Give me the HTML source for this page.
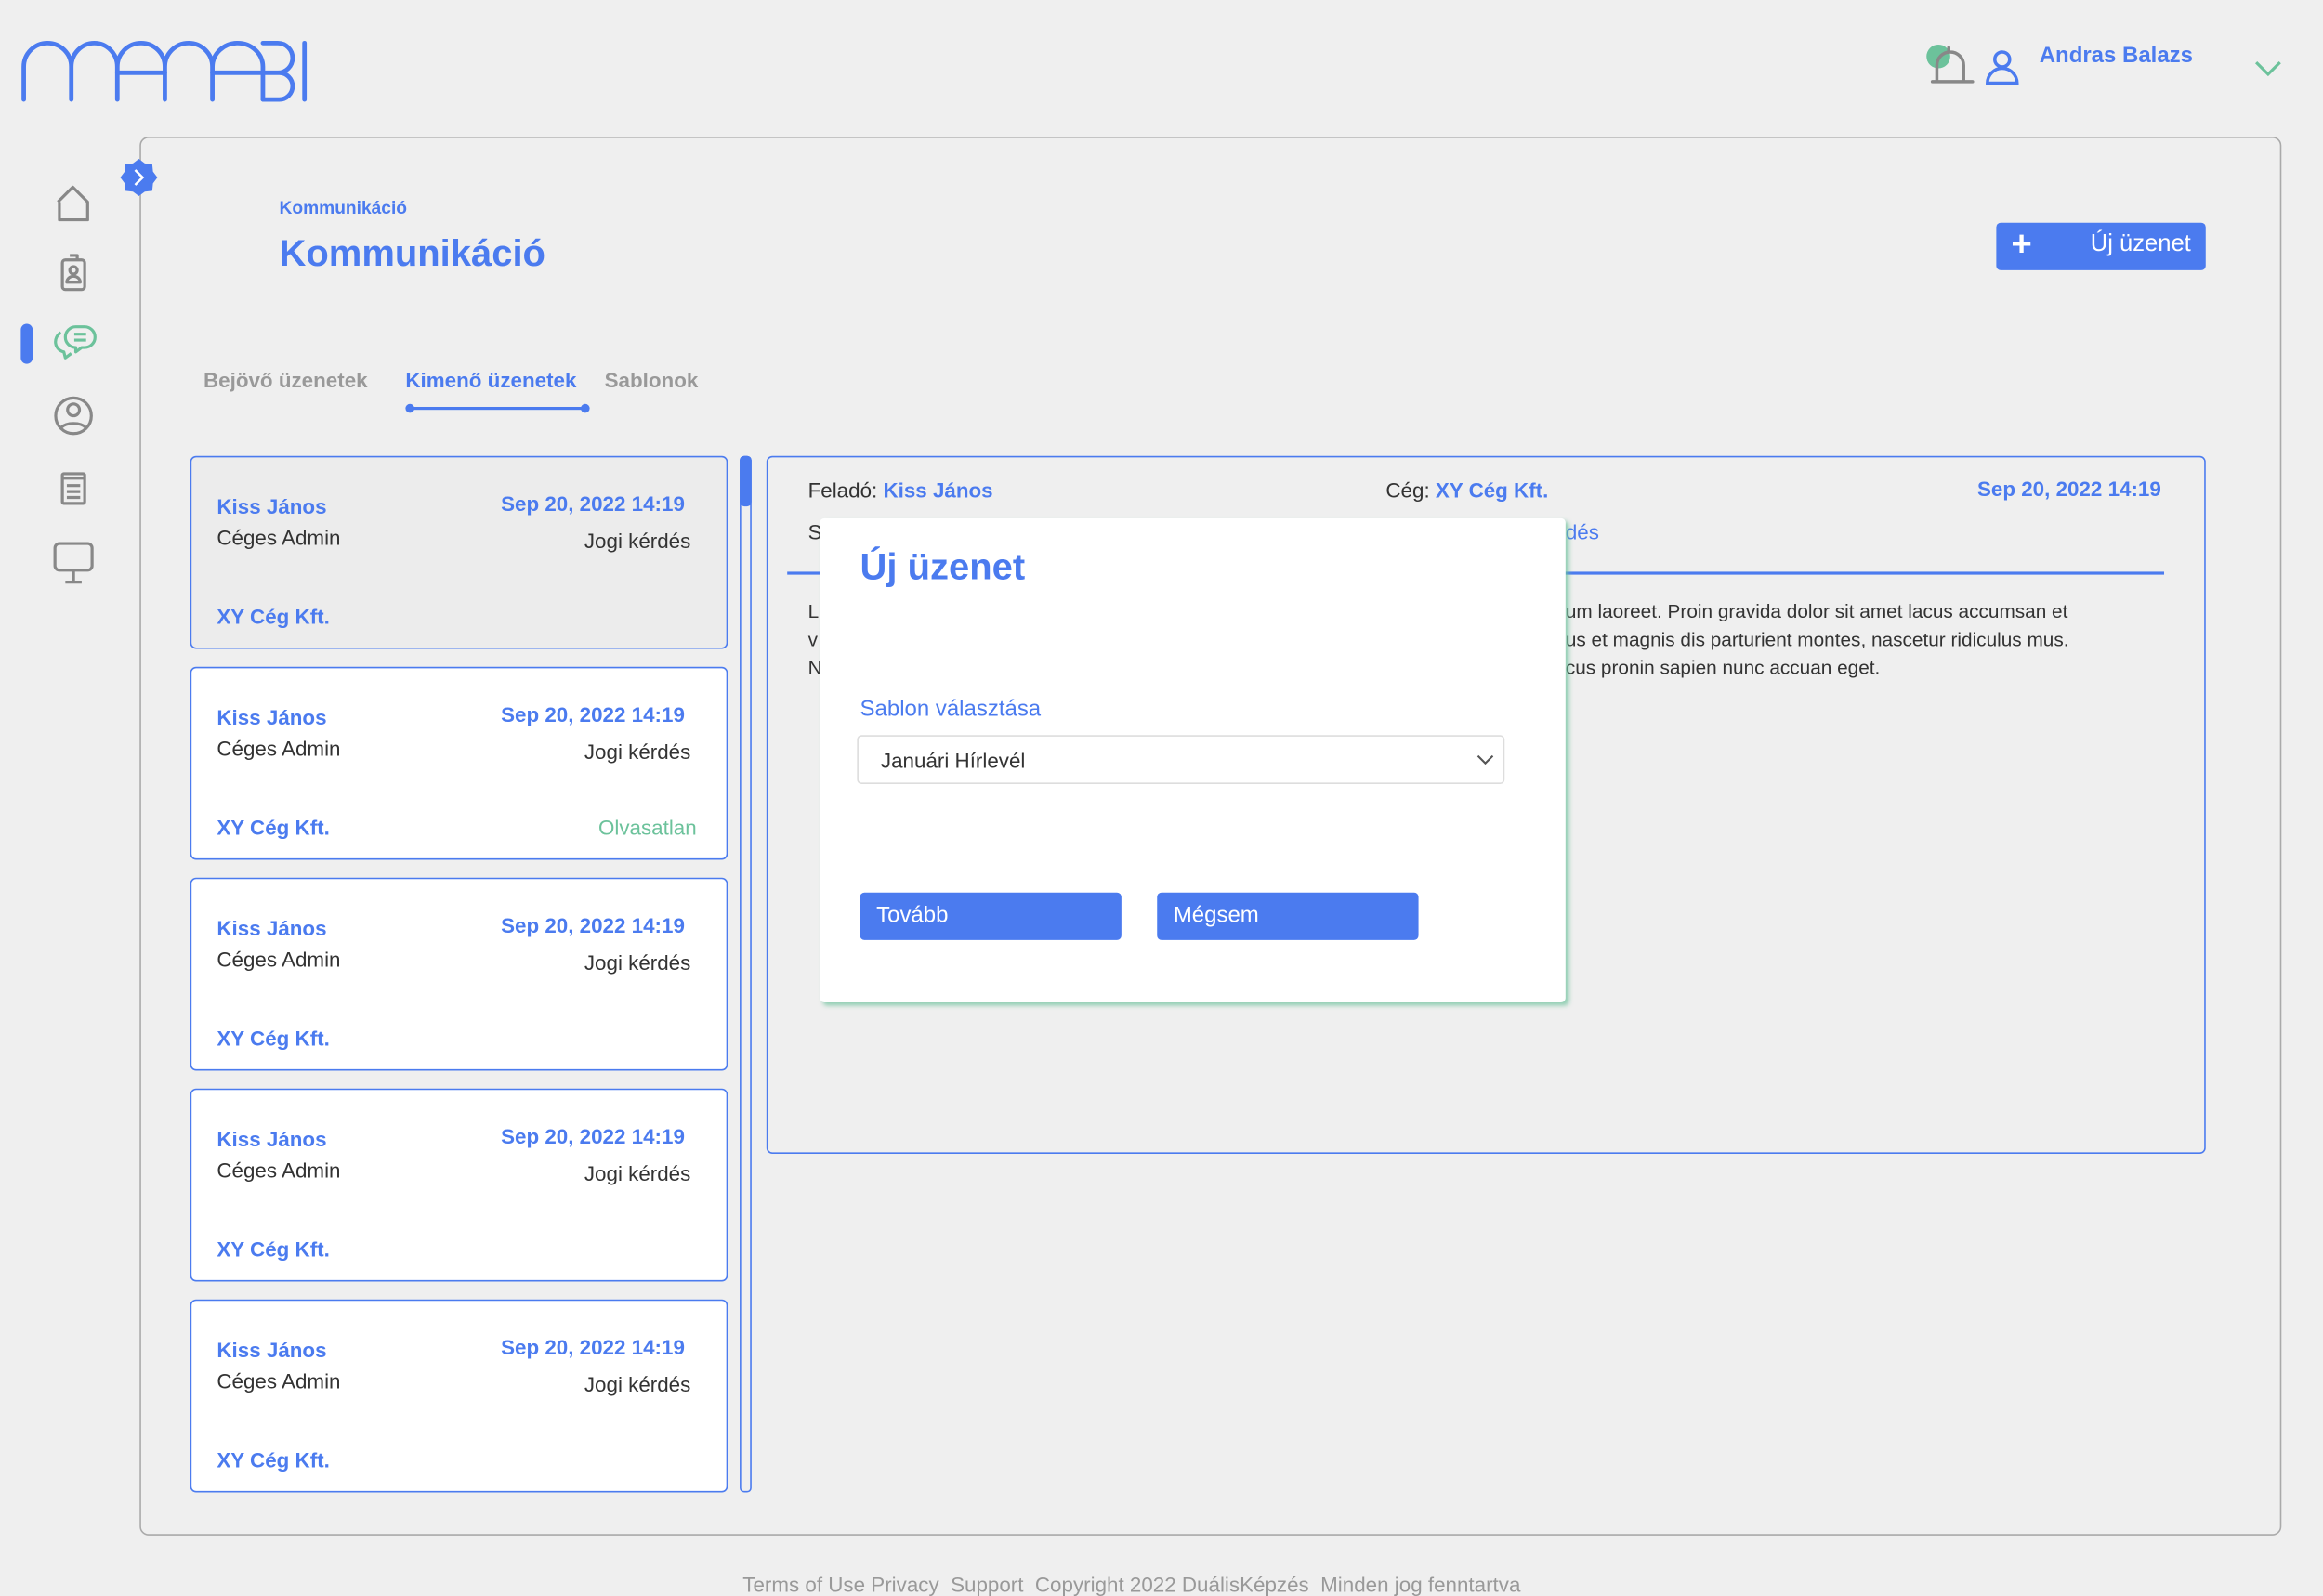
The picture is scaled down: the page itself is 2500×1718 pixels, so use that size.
<!DOCTYPE html>
<html><head><meta charset="utf-8"><style>
*{margin:0;padding:0;box-sizing:border-box}
html,body{width:2500px;height:1715px;overflow:hidden;background:#efefef}
#s{position:absolute;left:0;top:0;width:1564px;height:1073px;transform:scale(1.5985);transform-origin:0 0;font-family:"Liberation Sans",sans-serif;color:#333}
.a{position:absolute;white-space:nowrap}
.b{color:#4b7bef}
.bold{font-weight:bold}
.card{position:absolute;left:128px;width:362px;height:130px;border:1.5px solid #4b7bef;border-radius:4px;background:#fff}
.card .a{font-size:14px}
.btn{position:absolute;background:#4b7bef;border-radius:3px;color:#fff;font-size:15px}
</style></head><body><div id="s">
<svg class="a" style="left:0;top:0" width="220" height="80" viewBox="0 0 220 80" fill="none" stroke="#4b7bef" stroke-width="3" stroke-linecap="round">
<path d="M16 67V45A16 16 0 0 1 48 45V67M48 45A15.5 16 0 0 1 79 45V67M79 45A16 16 0 0 1 111 45V67M111 45A16 16 0 0 1 143 45V67M143 45A17 16 0 0 1 177 45V67"/>
<path d="M79 49H111M143 49H177"/>
<path d="M177 29H187A10 10 0 0 1 187 49H177M177 49H188A9 9 0 0 1 188 67H177"/>
<path d="M205 29V67"/>
</svg>
<div class="a" style="left:94px;top:92px;width:1442px;height:942px;border:1.5px solid #aaa;border-radius:6px"></div>
<svg class="a" style="left:80px;top:106px" width="27" height="27" viewBox="0 0 27 27"><path d="M13.5 1l4 3 5 .5.5 5 3 4-3 4-.5 5-5 .5-4 3-4-3-5-.5-.5-5-3-4 3-4 .5-5 5-.5z" fill="#4b7bef"/><path d="M11 8.5l5 5-5 5" stroke="#fff" stroke-width="1.6" fill="none"/></svg>
<svg class="a" style="left:34px;top:122px" width="32" height="280" viewBox="0 0 32 280" fill="none" stroke="#888" stroke-width="2" stroke-linejoin="round">
<path d="M5 14L15 4 25 14V26H6V14"/>
<rect x="8" y="53" width="15" height="20" rx="2"/><circle cx="15.5" cy="60" r="2.5"/><path d="M11 68a4.5 4 0 0 1 9 0z M13 50h5v3"/>
<path stroke="#6cc29b" d="M10 105a7 7 0 0 1 7-7h6a7 7 0 0 1 0 14h-2l-4 3v-3a7 7 0 0 1-7-7zM7 102a7 7 0 0 0 2 13l1 4 4-3M16 103h8M16 107h8"/>
<circle cx="15.5" cy="158" r="12"/><circle cx="15.5" cy="154" r="4"/><path d="M7 166a10 6 0 0 1 17 0"/>
<rect x="8" y="197" width="15" height="20" rx="1"/><path d="M8 200h15M11 205h9M11 209h9M11 213h9"/>
<rect x="3" y="244" width="25" height="18" rx="3"/><path d="M15.5 262v8M10 270h11"/>
</svg>
<div class="a" style="left:14px;top:218px;width:8px;height:27px;border-radius:4px;background:#4b7bef"></div>
<div class="a" style="left:1297px;top:30px;width:16px;height:16px;border-radius:50%;background:#6cc29b"></div>
<svg class="a" style="left:1298px;top:28px" width="100" height="30" viewBox="0 0 100 30" fill="none" stroke-width="2.2" stroke-linecap="round">
<path stroke="#888" d="M6 27V16a9 9 0 0 1 18 0V27M3 27H30M14 6V4"/>
<circle stroke="#4b7bef" cx="50" cy="12" r="5"/><path stroke="#4b7bef" d="M40 28a10 10 0 0 1 20 0z"/>
</svg>
<div class="a b bold" style="left:1373px;top:29px;font-size:15px">Andras Balazs</div>
<svg class="a" style="left:1517px;top:40px" width="20" height="12"><path d="M2 2l8 8 8-8" stroke="#6cc29b" stroke-width="2" fill="none"/></svg>
<div class="a b bold" style="left:188px;top:133px;font-size:12px">Kommunikáció</div>
<div class="a b bold" style="left:188px;top:157px;font-size:25px">Kommunikáció</div>
<div class="btn" style="left:1344px;top:150px;width:141px;height:32px"><span class="a" style="left:10px;top:1px;font-size:24px;font-weight:bold">+</span><span class="a" style="right:10px;top:6px;font-size:16px">Új üzenet</span></div>
<div class="a bold" style="left:137px;top:248px;font-size:14px;color:#999">Bejövő üzenetek</div>
<div class="a bold b" style="left:273px;top:248px;font-size:14px">Kimenő üzenetek</div>
<div class="a bold" style="left:407px;top:248px;font-size:14px;color:#999">Sablonok</div>
<div class="a" style="left:276px;top:274px;width:119px;height:2px;background:#4b7bef"></div>
<div class="a" style="left:273px;top:272px;width:6px;height:6px;border-radius:50%;background:#4b7bef"></div>
<div class="a" style="left:391px;top:272px;width:6px;height:6px;border-radius:50%;background:#4b7bef"></div>

<div class="card" style="top:307px;background:#ececec"><div class="a b bold" style="left:17px;top:25px">Kiss János</div><div class="a" style="left:17px;top:46px">Céges Admin</div><div class="a b bold" style="right:28px;top:23px">Sep 20, 2022 14:19</div><div class="a" style="right:24px;top:48px">Jogi kérdés</div><div class="a b bold" style="left:17px;top:99px">XY Cég Kft.</div></div>
<div class="card" style="top:449px"><div class="a b bold" style="left:17px;top:25px">Kiss János</div><div class="a" style="left:17px;top:46px">Céges Admin</div><div class="a b bold" style="right:28px;top:23px">Sep 20, 2022 14:19</div><div class="a" style="right:24px;top:48px">Jogi kérdés</div><div class="a b bold" style="left:17px;top:99px">XY Cég Kft.</div><div class="a" style="right:20px;top:99px;color:#6cc29b">Olvasatlan</div></div>
<div class="card" style="top:591px"><div class="a b bold" style="left:17px;top:25px">Kiss János</div><div class="a" style="left:17px;top:46px">Céges Admin</div><div class="a b bold" style="right:28px;top:23px">Sep 20, 2022 14:19</div><div class="a" style="right:24px;top:48px">Jogi kérdés</div><div class="a b bold" style="left:17px;top:99px">XY Cég Kft.</div></div>
<div class="card" style="top:733px"><div class="a b bold" style="left:17px;top:25px">Kiss János</div><div class="a" style="left:17px;top:46px">Céges Admin</div><div class="a b bold" style="right:28px;top:23px">Sep 20, 2022 14:19</div><div class="a" style="right:24px;top:48px">Jogi kérdés</div><div class="a b bold" style="left:17px;top:99px">XY Cég Kft.</div></div>
<div class="card" style="top:875px"><div class="a b bold" style="left:17px;top:25px">Kiss János</div><div class="a" style="left:17px;top:46px">Céges Admin</div><div class="a b bold" style="right:28px;top:23px">Sep 20, 2022 14:19</div><div class="a" style="right:24px;top:48px">Jogi kérdés</div><div class="a b bold" style="left:17px;top:99px">XY Cég Kft.</div></div>

<div class="a" style="left:498px;top:307px;width:8px;height:698px;border:1px solid #4b7bef;border-radius:3px"></div>
<div class="a" style="left:498px;top:307px;width:8px;height:34px;background:#4b7bef;border-radius:3px"></div>

<div class="a" style="left:516px;top:307px;width:969px;height:470px;border:1.5px solid #4b7bef;border-radius:4px"></div>
<div class="a" style="left:544px;top:322px;font-size:14px">Feladó: <span class="b bold">Kiss János</span></div>
<div class="a" style="left:933px;top:322px;font-size:14px">Cég: <span class="b bold">XY Cég Kft.</span></div>
<div class="a b bold" style="right:109px;top:321px;font-size:14px">Sep 20, 2022 14:19</div>
<div class="a" style="left:544px;top:350px;font-size:14px">S</div>
<div class="a b" style="left:1054px;top:350px;font-size:14px">dés</div>
<div class="a" style="left:530px;top:385px;width:927px;height:1.5px;background:#4b7bef"></div>
<div class="a" style="left:544px;top:402px;font-size:13px;line-height:19px">L<br>v<br>N</div>
<div class="a" style="left:1054px;top:402px;font-size:13px;line-height:19px">um laoreet. Proin gravida dolor sit amet lacus accumsan et<br>us et magnis dis parturient montes, nascetur ridiculus mus.<br>cus pronin sapien nunc accuan eget.</div>

<div class="a" style="left:552px;top:349px;width:502px;height:326px;background:#fff;border-radius:3px;box-shadow:2px 2px 3px rgba(108,194,155,.7)">
<div class="a b bold" style="left:27px;top:19px;font-size:25px">Új üzenet</div>
<div class="a b" style="left:27px;top:120px;font-size:15px">Sablon választása</div>
<div class="a" style="left:25px;top:146px;width:436px;height:33px;border:1px solid #ddd;border-radius:3px"><span class="a" style="left:15px;top:8px;font-size:14px">Januári Hírlevél</span><svg class="a" style="right:6px;top:12px" width="12" height="8"><path d="M1 1l5 5 5-5" stroke="#555" stroke-width="1.3" fill="none"/></svg></div>
<div class="btn" style="left:27px;top:252px;width:176px;height:32px"><span class="a" style="left:11px;top:7px">Tovább</span></div>
<div class="btn" style="left:227px;top:252px;width:176px;height:32px"><span class="a" style="left:11px;top:7px">Mégsem</span></div>
</div>

<div class="a" style="left:500px;top:1059px;font-size:14px;color:#999">Terms of Use Privacy &nbsp;Support &nbsp;Copyright 2022 DuálisKépzés &nbsp;Minden jog fenntartva</div>
</div></body></html>
